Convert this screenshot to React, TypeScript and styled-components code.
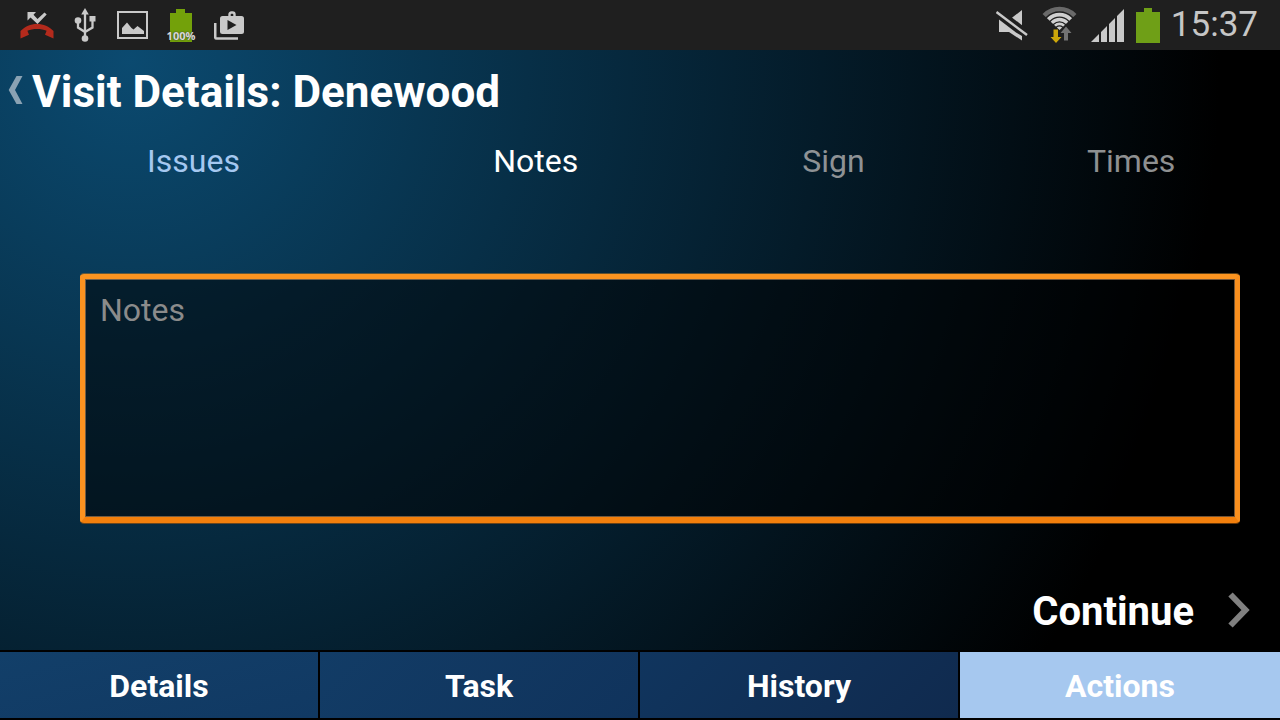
import React from 'react';
import styled, { createGlobalStyle } from 'styled-components';

const GlobalStyle = createGlobalStyle`
  *, *::before, *::after { box-sizing: border-box; }
  body { margin: 0; background: #000; }
  body, button, textarea { font-family: Roboto, "Liberation Sans", sans-serif; }
`;

const Screen = styled.div`
  display: flex;
  flex-direction: column;
  min-height: 100vh;
  color: #fff;
`;

const StatusBar = styled.header`
  display: flex;
  justify-content: space-between;
  align-items: center;
  height: 50px;
  padding: 0 22px 0 20px;
  background: #1f1f1f;
`;

const StatusGroup = styled.div<{ $gap: number }>`
  display: flex;
  align-items: center;
  gap: ${(p) => p.$gap}px;
`;

const Icon = styled.svg`
  display: block;
  flex: none;
`;

const BatteryBadge = styled.div`
  position: relative;
  width: 26px;
  height: 34px;
`;

const BatteryLevel = styled.span`
  position: absolute;
  left: 0;
  right: 0;
  bottom: 0;
  display: flex;
  justify-content: center;
  font: 700 11px/12px "Open Sans", sans-serif;
  color: #d8d8d8;
  text-shadow: 0 0 2px #333;
`;

const Clock = styled.time`
  font-size: 35px;
  line-height: 50px;
  color: #c6c6c6;
`;

const Content = styled.main`
  display: flex;
  flex-direction: column;
  flex: 1;
  background: radial-gradient(circle at 130px 10px, #0b4a70, #000 1090px);
`;

const TitleRow = styled.div`
  display: flex;
  align-items: center;
  gap: 8px;
  height: 80px;
  padding: 0 8px;
`;

const BackButton = styled.button`
  display: flex;
  padding: 0;
  border: 0;
  background: none;
`;

const Title = styled.h1`
  margin: 0;
  padding-top: 4px;
  font-size: 44px;
  line-height: 80px;
  font-weight: 700;
`;

const Steps = styled.nav`
  display: grid;
  grid-template-columns: 1.3fr 1fr 1fr 1fr;
  height: 62px;
`;

const Step = styled.button<{ $color: string }>`
  padding: 0;
  border: 0;
  background: none;
  font-size: 32px;
  line-height: 62px;
  color: ${(p) => p.$color};
`;

const NoteArea = styled.div`
  display: flex;
  flex: 1;
  padding: 82px 40px 49px 80px;
`;

const NoteInput = styled.textarea`
  flex: 1;
  min-height: 160px;
  padding: 11px 15px;
  border: 5px solid;
  border-bottom-width: 6px;
  border-color: #fb9420 #f98f1e #f27f0c #fb9220;
  border-radius: 4px;
  background: rgba(0, 0, 0, 0.5);
  background-clip: padding-box;
  box-shadow:
    inset 0 0 0 1px rgba(190, 140, 90, 0.6),
    0 -1px 0 rgba(160, 110, 40, 0.6),
    0 1px 0 rgba(170, 90, 10, 0.6);
  font-size: 32px;
  line-height: 40px;
  color: #fff;
  outline: none;
  resize: none;

  &::placeholder { color: #8b8b8b; opacity: 1; }
`;

const ContinueRow = styled.div`
  display: flex;
  justify-content: flex-end;
  padding: 0 30px 0 0;
`;

const ContinueButton = styled.button`
  display: flex;
  align-items: center;
  gap: 34px;
  height: 78px;
  padding: 0;
  border: 0;
  background: none;
  font-size: 40px;
  font-weight: 700;
  color: #fff;
`;

const BottomTabs = styled.nav`
  display: grid;
  grid-template-columns: repeat(4, 1fr);
  padding: 2px 0;
  background: #000;
`;

const BottomTab = styled.button<{ $fill: string }>`
  height: 66px;
  padding: 2px 0 0;
  border: 0;
  border-right: 2px solid #000;
  background: ${(p) => p.$fill};
  font-size: 32px;
  font-weight: 700;
  color: #fff;

  &:last-child { border-right: 0; }
`;

const steps = [
  { label: 'Issues', color: '#a5c8f0' },
  { label: 'Notes', color: '#ffffff' },
  { label: 'Sign', color: '#8e9295' },
  { label: 'Times', color: '#8e9091' },
];

const tabs = [
  { label: 'Details', fill: 'linear-gradient(165deg, #123f69, #113963)' },
  { label: 'Task', fill: 'linear-gradient(135deg, #123c66, #10335c)' },
  { label: 'History', fill: 'linear-gradient(135deg, #10355e, #102a4e)' },
  { label: 'Actions', fill: '#a6c8ef' },
];

const MissedCallIcon = () => (
  <Icon width="34" height="28" viewBox="0 0 34 28" aria-label="Missed call">
    <path d="M7.500 1h8.500L13.500 3.700 17.500 8 24.500 1.500 26.700 3.500 17.500 13 10.500 6.500 7.500 9.500z" fill="#c9c9c9" />
    <path d="M.5 27.500V20C5 15.500 10.500 13 17 13s12 2.500 16.500 7v7.500L25 23.800l1.600-4C21 17.500 13 17.500 7.400 19.800L9 23.800z" fill="#b32a1c" />
  </Icon>
);

const UsbIcon = () => (
  <Icon width="23" height="34" viewBox="0 0 23 34" aria-label="USB connected">
    <path d="M11 5v25M4 13v6.500l7 4.500M18.500 11v8.500L11 24" fill="none" stroke="#c9c9c9" strokeWidth="2.300" />
    <path d="M11 0l3.800 6.500H7.200z" fill="#c9c9c9" />
    <circle cx="4" cy="12.500" r="3.300" fill="#c9c9c9" />
    <path d="M15.500 8H21.500v5.500h-6z" fill="#c9c9c9" />
    <circle cx="11" cy="30.500" r="3.300" fill="#c9c9c9" />
  </Icon>
);

const PictureIcon = () => (
  <Icon width="31" height="28" viewBox="0 0 31 28" aria-label="Screenshot saved">
    <path d="M1 1h29v26H1z" fill="none" stroke="#c9c9c9" strokeWidth="2" />
    <path d="M5 23v-6l5-5.500 4.500 5.500 2 1.500 4-3.500 6.500 5v3z" fill="#c9c9c9" />
  </Icon>
);

const PlayStoreIcon = () => (
  <Icon width="30" height="29" viewBox="0 0 30 29" aria-label="App update">
    <path d="M1.200 12v14q0 1.500 1.500 1.500H24" fill="none" stroke="#c9c9c9" strokeWidth="2.600" />
    <path d="M15.500 6V3.500q0-2 2-2h1q2 0 2 2V6" fill="none" stroke="#c9c9c9" strokeWidth="2.400" />
    <rect x="6" y="5" width="24" height="18" rx="2.500" fill="#c9c9c9" />
    <path d="M13.500 9v10l9-5z" fill="#1f1f1f" />
  </Icon>
);

const MuteIcon = () => (
  <Icon width="35" height="32" viewBox="0 0 35 32" aria-label="Sound off">
    <path d="M3 10.500L20 23.500 26 27v4.500L13 23H3zM15 9.500L26 1v18z" fill="#c9c9c9" />
    <path d="M1 1L32 25" stroke="#1f1f1f" strokeWidth="6.500" />
    <path d="M.5 3L31 26" stroke="#c9c9c9" strokeWidth="2.400" />
  </Icon>
);

const WifiIcon = () => (
  <Icon width="38" height="38" viewBox="0 0 38 38" aria-label="Wi-Fi">
    <clipPath id="wifi-sector">
      <path d="M17.500 24L-6.500 1.500V-4h48v5.500z" />
    </clipPath>
    <g clipPath="url(#wifi-sector)" fill="none" stroke="#cfcfcf">
      <circle cx="17.500" cy="24" r="21" stroke="#696969" strokeWidth="4.400" />
      <circle cx="17.500" cy="24" r="15.300" strokeWidth="3.700" />
      <circle cx="17.500" cy="24" r="10.500" strokeWidth="3.300" />
      <circle cx="17.500" cy="24" r="6.200" strokeWidth="2.800" />
      <circle cx="17.500" cy="24" r="3.500" fill="#cfcfcf" stroke="none" />
    </g>
    <path d="M11.500 23.500h4.500v7.500h3.500L14 37 8.500 31h3z" fill="#cda70a" stroke="#1f1f1f" strokeWidth="1" paintOrder="stroke" />
    <path d="M24 20.500l5.500 6.500H26v7.500h-4V27h-3.500z" fill="#737373" />
  </Icon>
);

const SignalIcon = () => (
  <Icon width="34" height="34" viewBox="0 0 34 34" aria-label="Signal strength">
    <path d="M0 34L8 26v8zM10 24l6-6v16h-6zM18 16l6-6v24h-6zM26 8L33 1v33h-7z" fill="#c9c9c9" />
  </Icon>
);

const BatteryIcon = () => (
  <Icon width="24" height="35" viewBox="0 0 24 35" aria-label="Battery">
    <path d="M0 4h8V0h8v4h8v31H0z" fill="#6f9f17" />
  </Icon>
);

export default function App() {
  return (
    <Screen>
      <GlobalStyle />
      <StatusBar>
        <StatusGroup $gap={20}>
          <MissedCallIcon />
          <UsbIcon />
          <PictureIcon />
          <BatteryBadge>
            <Icon width="26" height="34" viewBox="1 -1 26 34" aria-label="Battery">
              <path d="M3 4h6V0h9v4h7v29H3z" fill="#73a10a" />
            </Icon>
            <BatteryLevel>100%</BatteryLevel>
          </BatteryBadge>
          <PlayStoreIcon />
        </StatusGroup>
        <StatusGroup $gap={11}>
          <MuteIcon />
          <WifiIcon />
          <SignalIcon />
          <BatteryIcon />
          <Clock>15:37</Clock>
        </StatusGroup>
      </StatusBar>
      <Content>
        <TitleRow>
          <BackButton type="button" aria-label="Back">
            <Icon width="16" height="28" viewBox="0 0 16 28">
              <path d="M8.500 0H14.500L7 14l7.500 14H8.500L.7 14z" fill="#8aa2b3" />
            </Icon>
          </BackButton>
          <Title>Visit Details: Denewood</Title>
        </TitleRow>
        <Steps>
          {steps.map((s) => (
            <Step key={s.label} type="button" $color={s.color}>{s.label}</Step>
          ))}
        </Steps>
        <NoteArea>
          <NoteInput placeholder="Notes" aria-label="Notes" />
        </NoteArea>
        <ContinueRow>
          <ContinueButton type="button">
            Continue
            <Icon width="22" height="38" viewBox="0 0 22 38">
              <path d="M2.500 2.500L17.500 18 2.500 33.500" fill="none" stroke="#808080" strokeWidth="6" />
            </Icon>
          </ContinueButton>
        </ContinueRow>
      </Content>
      <BottomTabs>
        {tabs.map((t) => (
          <BottomTab key={t.label} type="button" $fill={t.fill}>{t.label}</BottomTab>
        ))}
      </BottomTabs>
    </Screen>
  );
}
